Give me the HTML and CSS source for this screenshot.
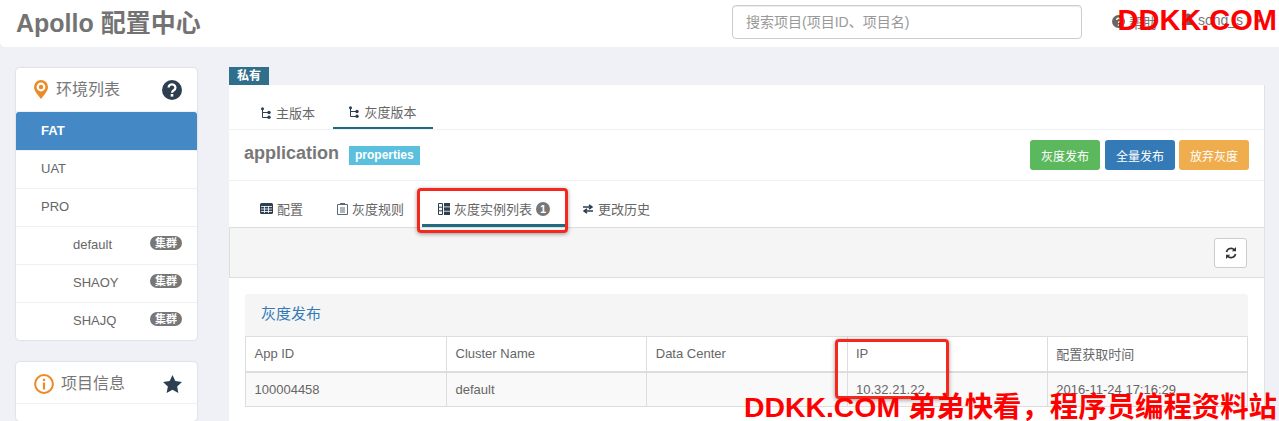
FILE: index.html
```html
<!DOCTYPE html>
<html lang="en">
<head>
    <meta charset="UTF-8">
    <title>Apollo 配置中心</title>
    <link rel="stylesheet" href="styles.css">
</head>
<body>
    <header class="topbar">
        <div class="brand">Apollo 配置中心</div>
        <input class="search" type="text" placeholder="搜索项目(项目ID、项目名)">
        <div class="top-links">
            <span class="top-help"><svg width="13" height="13" viewBox="0 0 14 14"><circle cx="7" cy="7" r="7" fill="#666"/><path d="M5 5.500a2 2 0 1 1 3 1.700c-.7.4-1 .8-1 1.500M7 10.200v1.300" fill="none" stroke="#fff" stroke-width="1.400"/></svg> 帮助</span>
            <span class="top-user"><svg width="12" height="12" viewBox="0 0 12 12"><circle cx="6" cy="3.500" r="3" fill="#666"/><path d="M0 12c0-4 2-5 6-5s6 1 6 5z" fill="#666"/></svg> song_s <i class="caret"></i></span>
        </div>
    </header>

    <div class="page">
        <aside class="side">
            <div class="box">
                <div class="box-head">
                    <svg class="head-icon" width="14" height="19" viewBox="0 0 14 19"><path d="M7 0a7 7 0 0 0-7 7c0 4 4 8 7 12 3-4 7-8 7-12a7 7 0 0 0-7-7z" fill="#ec8a25"/><circle cx="7" cy="7" r="4.400" fill="#fff"/><circle cx="7" cy="7" r="2.200" fill="#ec8a25"/></svg>
                    <span class="head-title">环境列表</span>
                    <svg class="head-right" width="20" height="20" viewBox="0 0 20 20"><circle cx="10" cy="10" r="10" fill="#2c3e50"/><path d="M6.600 7.600a3.400 3.200 0 1 1 5.200 2.700c-1.200.8-1.800 1.300-1.800 2.500" fill="none" stroke="#fff" stroke-width="2.300"/><rect x="8.700" y="14" width="2.600" height="2.600" fill="#fff"/></svg>
                </div>
                <ul class="env-list">
                    <li class="env active">FAT</li>
                    <li class="env">UAT</li>
                    <li class="env">PRO</li>
                    <li class="env sub">default <span class="badge">集群</span></li>
                    <li class="env sub">SHAOY <span class="badge">集群</span></li>
                    <li class="env sub">SHAJQ <span class="badge">集群</span></li>
                </ul>
            </div>
            <div class="box box-info">
                <div class="box-head">
                    <svg class="head-icon" width="20" height="20" viewBox="0 0 20 20"><circle cx="10" cy="10" r="8.900" fill="none" stroke="#ec8a25" stroke-width="2"/><rect x="8.900" y="8.500" width="2.200" height="7" fill="#ec8a25"/><rect x="8.900" y="4.800" width="2.200" height="2.200" fill="#ec8a25"/></svg>
                    <span class="head-title">项目信息</span>
                    <svg class="head-right" width="19" height="18" viewBox="0 0 20 19"><path d="M10 0l3 6.400 7 .9-5.100 4.800 1.300 6.900-6.200-3.400-6.200 3.400 1.300-6.900L0 7.300l7-.9z" fill="#2c3e50"/></svg>
                </div>
            </div>
        </aside>

        <main class="main">
            <span class="tag-private">私有</span>
            <div class="card">
                <nav class="version-tabs">
                    <span class="vtab"><svg class="fork" width="10" height="12" viewBox="0 0 10 12"><path d="M1.500 2v8.500H7M1.500 5.500H7" fill="none" stroke="#2c3e50" stroke-width="1"/><g fill="#2c3e50"><circle cx="1.500" cy="1.700" r="1.500"/><circle cx="8" cy="5.500" r="1.700"/><circle cx="8" cy="10.300" r="1.700"/></g></svg>主版本</span>
                    <span class="vtab current"><svg class="fork" width="10" height="12" viewBox="0 0 10 12"><path d="M1.500 2v8.500H7M1.500 5.500H7" fill="none" stroke="#2c3e50" stroke-width="1"/><g fill="#2c3e50"><circle cx="1.500" cy="1.700" r="1.500"/><circle cx="8" cy="5.500" r="1.700"/><circle cx="8" cy="10.300" r="1.700"/></g></svg>灰度版本</span>
                </nav>
                <div class="ns-row">
                    <span class="ns-name">application</span>
                    <span class="ns-format">properties</span>
                    <div class="ns-actions">
                        <button class="btn green">灰度发布</button>
                        <button class="btn blue">全量发布</button>
                        <button class="btn orange">放弃灰度</button>
                    </div>
                </div>
                <nav class="sub-tabs">
                    <span class="stab"><svg width="13" height="11" viewBox="0 0 13 11"><rect width="13" height="11" rx="1.500" fill="#2c3e50"/><path d="M1 3.500h11M1 6h11M1 8.500h11M4.500 3v7M8.500 3v7" stroke="#fff" stroke-width=".8"/></svg>配置</span>
                    <span class="stab"><svg width="11" height="12" viewBox="0 0 11 12"><path d="M.5 1.500h10v10H.5zM3 5h5M3 7h5M3 9h5" fill="none" stroke="#5a6a7a"/><path d="M3 .5h5" stroke="#5a6a7a"/></svg>灰度规则</span>
                    <span class="stab current"><svg width="12" height="12" viewBox="0 0 12 12"><path d="M.5.5h4v11h-4zM.5 4.200h4M.5 7.800h4" fill="none" stroke="#2c3e50"/><g fill="#2c3e50"><rect x="6" width="6" height="3.500"/><rect x="6" y="4.300" width="6" height="3.500"/><rect x="6" y="8.600" width="6" height="3.400"/></g></svg>灰度实例列表 <span class="count">1</span></span>
                    <span class="stab"><svg width="12" height="10" viewBox="0 0 12 10"><path d="M1 3h8M7 .8L10 3 7 5.200M11 7H3M5 4.800L2 7l3 2.200" fill="none" stroke="#2c3e50" stroke-width="1.500"/></svg>更改历史</span>
                </nav>
                <div class="toolbar">
                    <button class="refresh"><svg width="12" height="12" viewBox="0 0 12 12"><path d="M1.500 5a4.600 4.600 0 0 1 8-2M10.500 7a4.600 4.600 0 0 1-8 2" fill="none" stroke="#333" stroke-width="1.700"/><path d="M11 0v4.200H6.800zM1 12V7.800h4.200z" fill="#333"/></svg></button>
                </div>
                <div class="content">
                    <div class="release">
                        <div class="release-head">灰度发布</div>
                        <table class="instances">
                            <thead>
                                <tr><th class="col-first">App ID</th><th>Cluster Name</th><th>Data Center</th><th>IP</th><th>配置获取时间</th></tr>
                            </thead>
                            <tbody>
                                <tr><td>100004458</td><td>default</td><td></td><td>10.32.21.22</td><td>2016-11-24 17:16:29</td></tr>
                            </tbody>
                        </table>
                    </div>
                </div>
            </div>
        </main>
    </div>

    <div class="mark mark-tab"></div>
    <div class="mark mark-ip"></div>
    <div class="wm wm-top">DDKK.COM</div>
    <div class="wm wm-bottom">DDKK.COM 弟弟快看，程序员编程资料站</div>
</body>
</html>
```

FILE: styles.css
```css
html, body {
    height: 421px;
    overflow: hidden;
}
body {
    position: relative;
    margin: 0;
    background: #eff1f6;
    font-family: "Liberation Sans", "Noto Sans CJK SC", sans-serif;
    font-size: 13px;
    color: #666;
}

/* top bar */
.topbar {
    display: flex;
    align-items: center;
    height: 47px;
    padding-left: 16px;
    background: #fff;
    border-bottom-left-radius: 5px;
    box-sizing: border-box;
}
.brand {
    width: 716px;
    font-size: 25px;
    font-weight: bold;
    color: #737373;
    margin-top: -6px;
}
.search {
    width: 350px;
    height: 34px;
    margin-top: -3px;
    padding: 0 13px;
    border: 1px solid #ccc;
    border-radius: 4px;
    box-sizing: border-box;
    box-shadow: inset 0 1px 1px rgba(0,0,0,.075);
    font-family: inherit;
    font-size: 14px;
}
.search::placeholder { color: #999; }
.top-links {
    display: flex;
    margin-left: 30px;
    margin-top: -4px;
    font-size: 14px;
    color: #777;
}
.top-help { width: 70px; }
.caret {
    display: inline-block;
    margin-left: 8px;
    border-top: 4px solid #777;
    border-left: 4px solid transparent;
    border-right: 4px solid transparent;
    vertical-align: middle;
}

/* page columns */
.page {
    display: flex;
    align-items: flex-start;
    padding: 20px 14px 0 16px;
}
.side {
    width: 181px;
    margin-top: 1px;
    margin-right: 32px;
    flex: none;
}
.box {
    background: #fff;
    border-radius: 4px;
    box-shadow: 0 0 2px rgba(0,0,0,.2);
}
.box-info {
    margin-top: 22px;
    height: 59px;
}
.box-head {
    display: flex;
    align-items: center;
    height: 43px;
    padding: 0 15px 0 18px;
    border-bottom: 1px solid #eef0f4;
}
.box-info .box-head {
    height: 39px;
    padding-top: 2px;
}
.head-title {
    margin-left: 8px;
    margin-top: -3px;
    font-size: 16px;
    color: #777;
}
.box-info .head-title { margin-left: 7px; }
.head-right { margin-left: auto; }
.env-list {
    margin: 0;
    padding: 0;
    list-style: none;
}
.env {
    display: flex;
    align-items: center;
    height: 35px;
    padding: 0 15px 2px 25px;
    border-top: 1px solid #eef0f4;
    color: #666;
}
.env.active {
    background: #4588c6;
    border-top-color: #4588c6;
    border-radius: 3px 3px 0 0;
    color: #fff;
    font-weight: bold;
}
.env.sub { padding-left: 57px; }
.badge {
    margin-left: auto;
    margin-top: -3px;
    padding: 0 5px;
    height: 14px;
    line-height: 14px;
    border-radius: 7px;
    background: #777;
    color: #fff;
    font-size: 11px;
    font-weight: bold;
}

/* main card */
.main {
    flex: 1;
    min-width: 0;
}
.tag-private {
    display: block;
    width: 40px;
    height: 18px;
    line-height: 18px;
    background: #2f6f8c;
    color: #fff;
    font-size: 12px;
    font-weight: bold;
    text-align: center;
}
.card {
    background: #fff;
    border-right: 1px solid #e0e2e8;
    height: 336px;
}
.version-tabs, .sub-tabs {
    display: flex;
    align-items: flex-end;
    border-bottom: 1px solid #eef0f4;
    box-sizing: border-box;
}
.version-tabs {
    height: 45px;
    padding-left: 14px;
}
.vtab {
    display: flex;
    align-items: center;
    justify-content: center;
    height: 30px;
    width: 90px;
    box-sizing: border-box;
    padding-bottom: 3px;
    color: #666;
}
.vtab.current {
    width: 100px;
    border-bottom: 2px solid #1f6b80;
}
.fork { margin-right: 5px; }
.ns-row {
    display: flex;
    align-items: center;
    height: 51px;
    padding: 0 15px;
    border-bottom: 1px solid #eef0f4;
    box-sizing: border-box;
}
.ns-name {
    margin-top: -4px;
    font-size: 18px;
    font-weight: bold;
    color: #777;
}
.ns-format {
    margin-left: 10px;
    padding: 0 6px;
    height: 19px;
    line-height: 19px;
    background: #5bc0de;
    color: #fff;
    font-weight: bold;
    font-size: 12px;
}
.ns-actions {
    display: flex;
    gap: 5px;
    margin-left: auto;
}
.btn {
    width: 70px;
    height: 30px;
    padding: 0;
    border: 0;
    border-radius: 3px;
    color: #fff;
    font-family: inherit;
    font-size: 12px;
}
.green { background: #5cb85c; }
.blue { background: #337ab7; }
.orange {
    background: #f0ad4e;
    margin-left: -1px;
}
.sub-tabs {
    height: 47px;
    padding-left: 14px;
    border-bottom: 1px solid #ddd;
}
.stab {
    display: flex;
    align-items: center;
    height: 34px;
    padding: 0 17px 3px;
    box-sizing: border-box;
    color: #666;
}
.stab svg { margin-right: 4px; }
.stab.current {
    border-bottom: 3px solid #1f6b80;
    padding: 0 16px;
    margin: 0 -1px 0 1px;
}
.count {
    display: inline-block;
    margin-left: 4px;
    width: 14px;
    height: 14px;
    line-height: 14px;
    border-radius: 50%;
    background: #777;
    color: #fff;
    font-size: 11px;
    font-weight: bold;
    text-align: center;
}
.toolbar {
    display: flex;
    justify-content: flex-end;
    align-items: center;
    height: 50px;
    padding-right: 17px;
    background: #f5f5f5;
    border-bottom: 1px solid #ddd;
    border-left: 1px solid #ddd;
    box-sizing: border-box;
}
.refresh {
    display: flex;
    align-items: center;
    justify-content: center;
    width: 33px;
    height: 30px;
    padding: 0;
    background: #fff;
    border: 1px solid #ccc;
    border-radius: 3px;
}
.content { padding: 16px 16px 0; }
.release-head {
    height: 42px;
    line-height: 39px;
    padding-left: 16px;
    background: #f5f5f5;
    border-radius: 3px 3px 0 0;
    font-size: 15px;
    color: #337ab7;
    box-sizing: border-box;
}
.instances {
    width: 1003px;
    table-layout: fixed;
    border-collapse: collapse;
    border: 1px solid #ddd;
}
.instances th, .instances td {
    height: 35px;
    padding: 0 9px 0 8.5px;
    border: 1px solid #ddd;
    font-weight: normal;
    text-align: left;
    color: #666;
    box-sizing: border-box;
}
.instances .col-first { width: 201px; }
.instances thead th { border-bottom-width: 2px; }
.instances td { background: #f9f9f9; }

/* annotations pasted over the screenshot */
.mark {
    position: absolute;
    border: 3px solid #f5281e;
    border-radius: 4px;
    box-shadow: 0 1px 4px rgba(0,0,0,.4);
    box-sizing: border-box;
}
.mark-tab {
    left: 417px;
    top: 188px;
    width: 151px;
    height: 45px;
}
.mark-ip {
    left: 835px;
    top: 339px;
    width: 114px;
    height: 60px;
}
.wm {
    position: absolute;
    color: #f00;
    font-weight: bold;
    white-space: nowrap;
    line-height: 1;
}
.wm-top {
    right: 2px;
    top: 6px;
    font-size: 29px;
}
.wm-bottom {
    right: 2px;
    top: 393px;
    font-size: 28.4px;
}
```
